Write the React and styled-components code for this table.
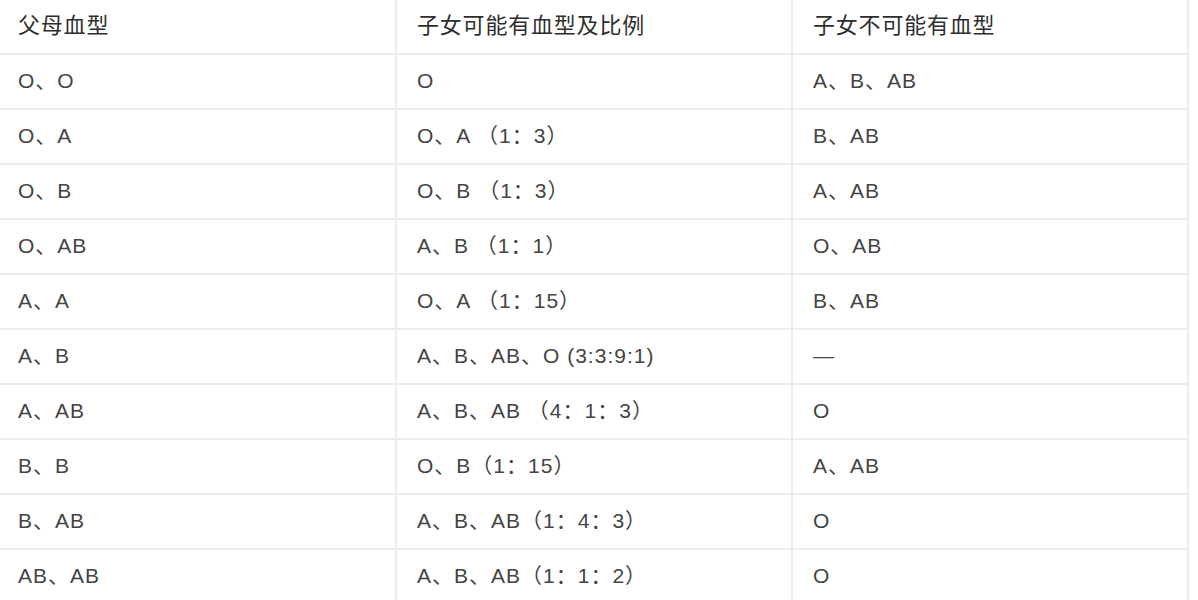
import React from "react";
import styled, { createGlobalStyle } from "styled-components";

const Global = createGlobalStyle`
  html, body { margin: 0; padding: 0; background: #ffffff; }
  body { overflow: hidden; }
`;

const Table = styled.table`
  width: 1189px;
  border-collapse: collapse;
  table-layout: fixed;
  font-family: "Liberation Sans", "Noto Sans CJK SC", sans-serif;
  font-size: 21px;
  color: #444444;
`;

const Cell = styled.td`
  height: 51px;
  padding: 0 0 2px ${(p) => (p.$first ? 18 : 20)}px;
  border-bottom: 2px solid #ececec;
  border-right: 2px solid #ececec;
  vertical-align: middle;
  white-space: nowrap;
  line-height: 1;
  letter-spacing: 1px;
`;

const HeadCell = styled(Cell).attrs({ as: "th" })`
  font-weight: normal;
  text-align: left;
  color: #2e2e2e;
  font-size: 22px;
  letter-spacing: 0.8px;
  height: 52px;
  padding-bottom: 1px;
`;

const rows = [
  ["O、O", "O", "A、B、AB"],
  ["O、A", "O、A （1：3）", "B、AB"],
  ["O、B", "O、B （1：3）", "A、AB"],
  ["O、AB", "A、B （1：1）", "O、AB"],
  ["A、A", "O、A （1：15）", "B、AB"],
  ["A、B", "A、B、AB、O (3:3:9:1)", "—"],
  ["A、AB", "A、B、AB （4：1：3）", "O"],
  ["B、B", "O、B（1：15）", "A、AB"],
  ["B、AB", "A、B、AB（1：4：3）", "O"],
  ["AB、AB", "A、B、AB（1：1：2）", "O"],
];

export default function App() {
  return (
    <>
      <Global />
      <Table>
        <thead>
          <tr>
            <HeadCell $first>父母血型</HeadCell>
            <HeadCell>子女可能有血型及比例</HeadCell>
            <HeadCell>子女不可能有血型</HeadCell>
          </tr>
        </thead>
        <tbody>
          {rows.map((r, i) => (
            <tr key={i}>
              <Cell $first>{r[0]}</Cell>
              <Cell>{r[1]}</Cell>
              <Cell>{r[2]}</Cell>
            </tr>
          ))}
        </tbody>
      </Table>
    </>
  );
}
